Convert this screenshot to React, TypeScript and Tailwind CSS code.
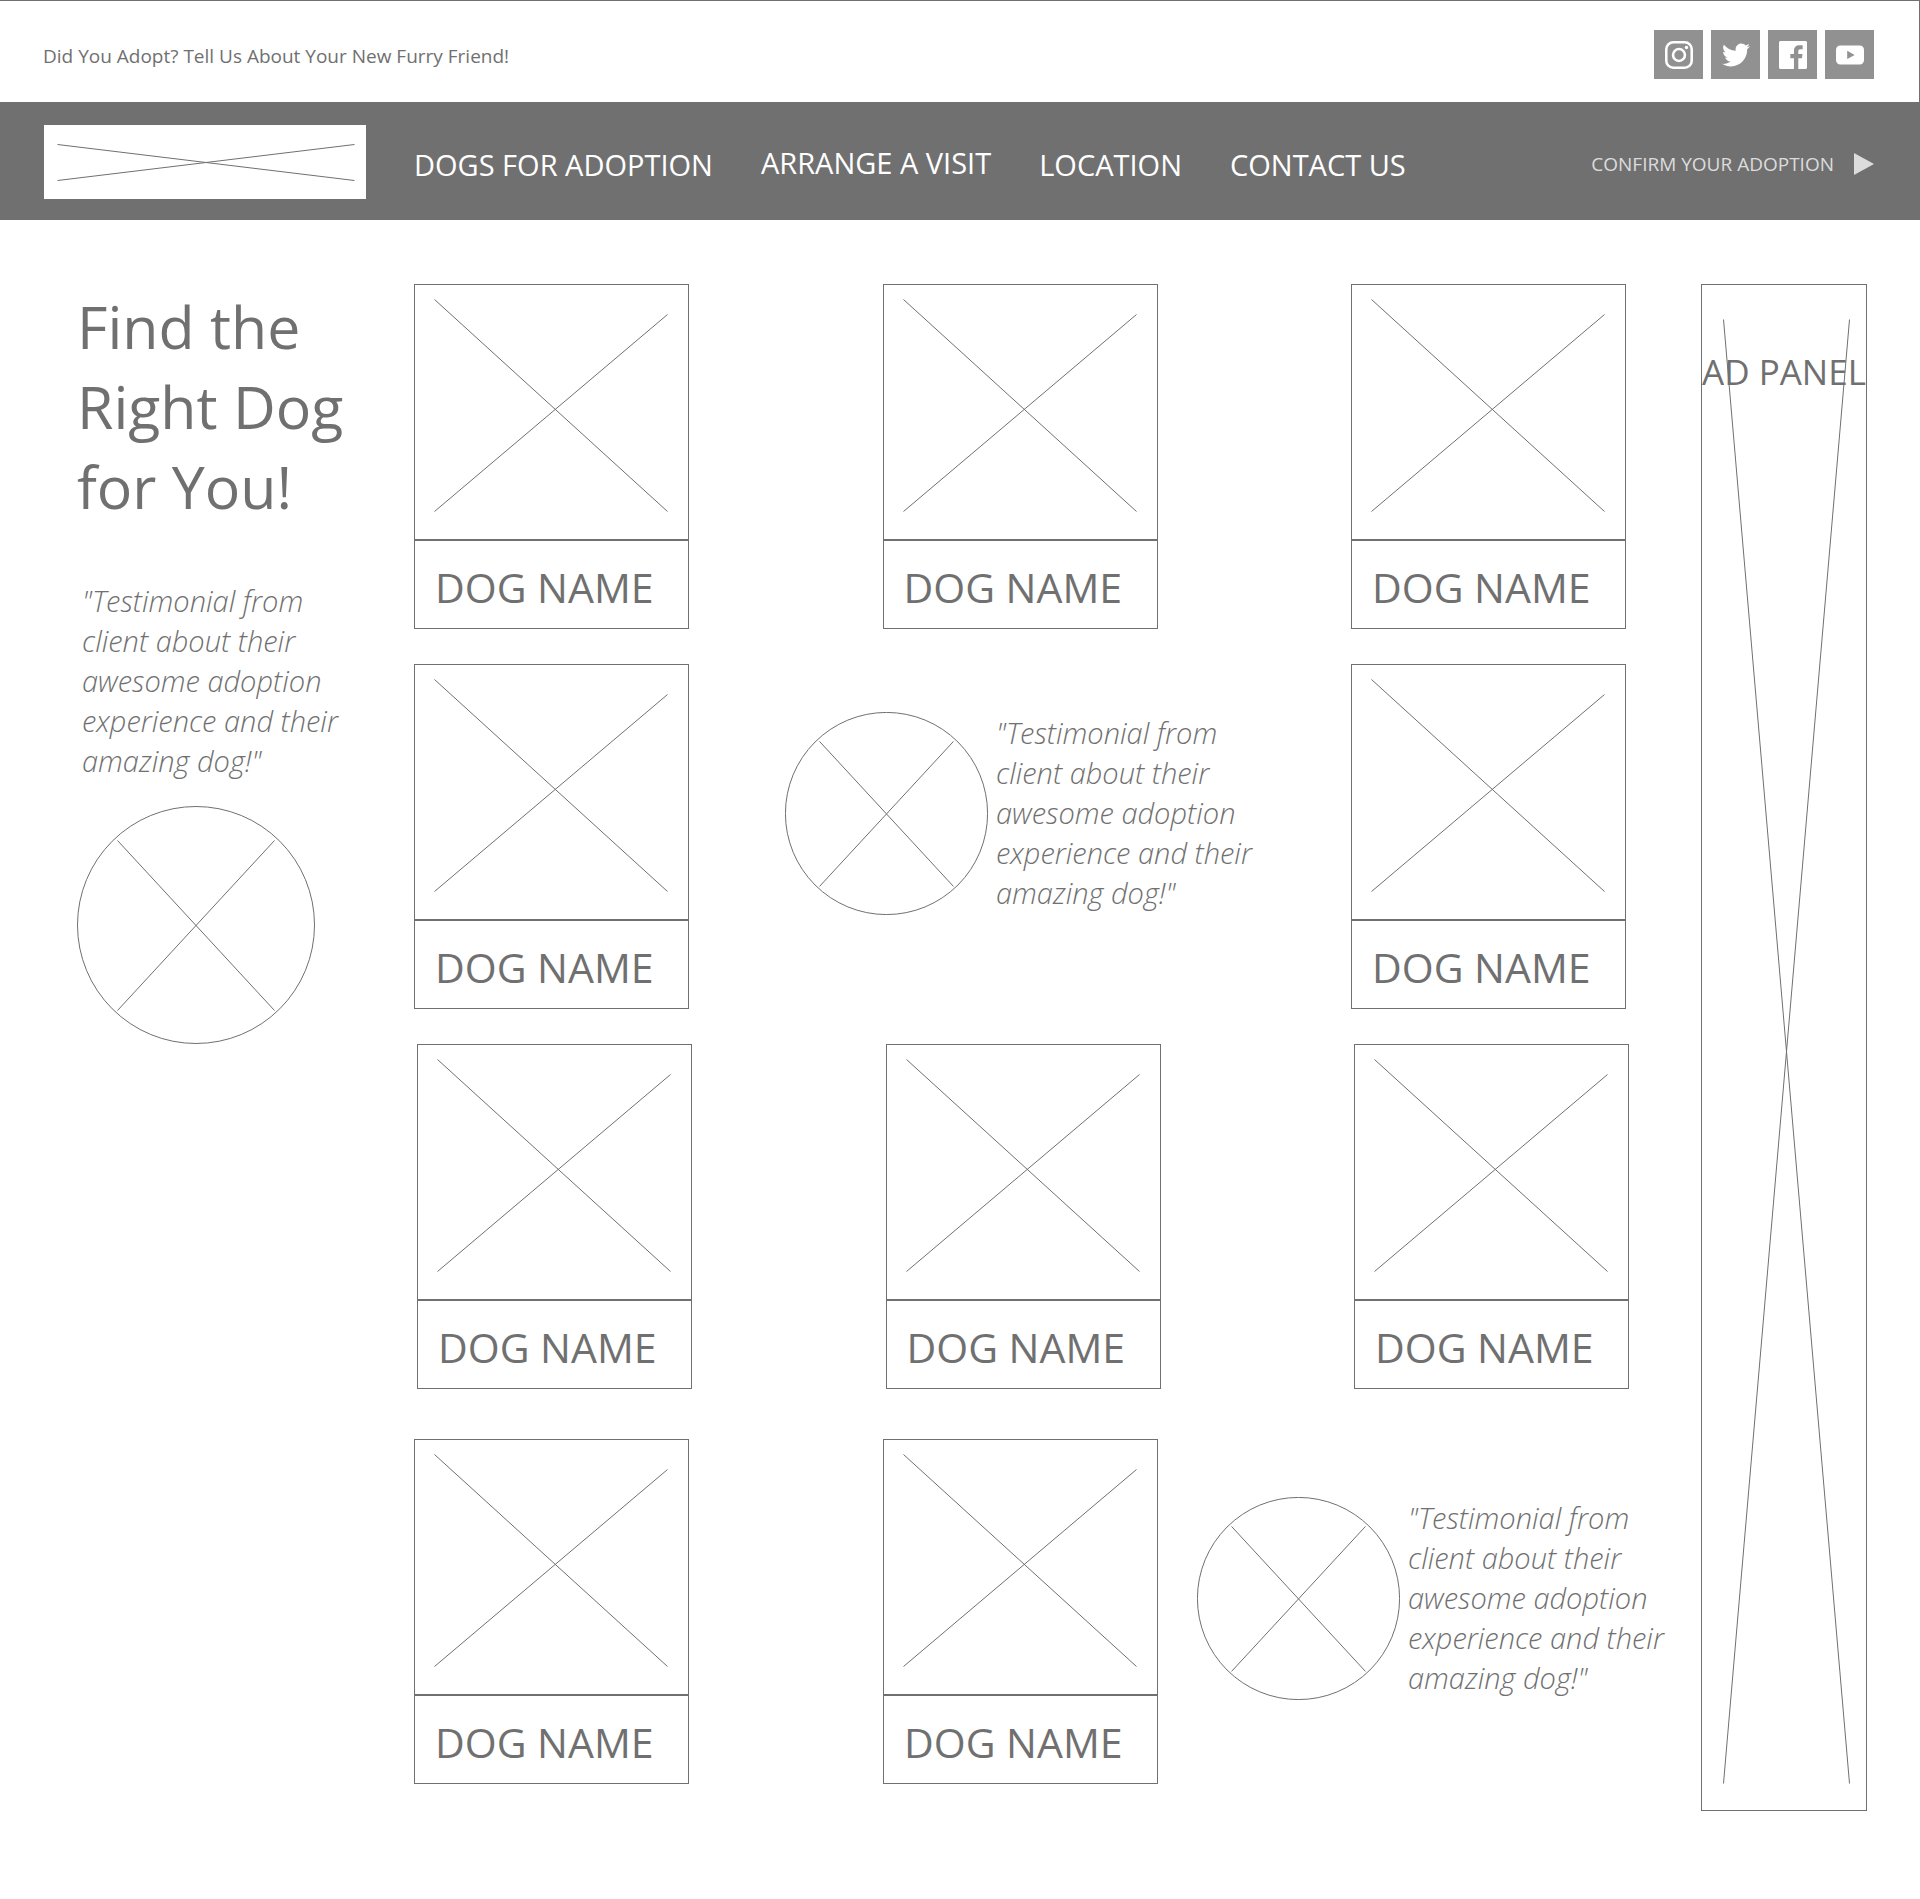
import type { ReactNode } from "react";

const QUOTE_LINES = [
  '"Testimonial from',
  "client about their",
  "awesome adoption",
  "experience and their",
  'amazing dog!"',
];

const SOCIALS: { label: string; icon: ReactNode }[] = [
  {
    label: "Instagram",
    icon: (
      <>
        <rect x="1.1" y="1.1" width="21.8" height="21.8" rx="6" fill="none" stroke="currentColor" strokeWidth="2.2" />
        <circle cx="12" cy="12" r="5.1" fill="none" stroke="currentColor" strokeWidth="2.2" />
        <circle cx="18.4" cy="5.6" r="1.45" />
      </>
    ),
  },
  {
    label: "Twitter",
    icon: (
      <path d="M23.954 4.569c-.885.389-1.83.654-2.825.775 1.014-.611 1.794-1.574 2.163-2.723-.951.555-2.005.959-3.127 1.184-.896-.959-2.173-1.559-3.591-1.559-2.717 0-4.92 2.203-4.92 4.917 0 .39.045.765.127 1.124C7.691 8.094 4.066 6.13 1.64 3.161c-.427.722-.666 1.561-.666 2.475 0 1.71.87 3.213 2.188 4.096-.807-.026-1.566-.248-2.228-.616v.061c0 2.385 1.693 4.374 3.946 4.827-.413.111-.849.171-1.296.171-.314 0-.615-.03-.916-.086.631 1.953 2.445 3.377 4.604 3.417-1.68 1.319-3.809 2.105-6.102 2.105-.39 0-.779-.023-1.17-.067 2.189 1.394 4.768 2.209 7.557 2.209 9.054 0 13.999-7.496 13.999-13.986 0-.209 0-.42-.015-.63.961-.689 1.8-1.56 2.46-2.548l-.047-.02z" />
    ),
  },
  {
    label: "Facebook",
    icon: (
      <path d="M22.676 0H1.324C.593 0 0 .593 0 1.324v21.352C0 23.408.593 24 1.324 24h11.494v-9.294H9.689v-3.621h3.129V8.41c0-3.099 1.894-4.785 4.659-4.785 1.325 0 2.464.097 2.796.141v3.24h-1.921c-1.5 0-1.792.721-1.792 1.771v2.311h3.584l-.465 3.63H16.56V24h6.115c.733 0 1.325-.592 1.325-1.324V1.324C24 .593 23.408 0 22.676 0" />
    ),
  },
  {
    label: "YouTube",
    icon: (
      <path
        fillRule="evenodd"
        d="M3.6 3.8h16.8a3.6 3.6 0 0 1 3.6 3.6v9.2a3.6 3.6 0 0 1-3.6 3.6H3.6a3.6 3.6 0 0 1-3.6-3.6V7.4a3.6 3.6 0 0 1 3.6-3.6zM9.6 8.3v7.2l6.4-3.6z"
      />
    ),
  },
];

function DogCard() {
  return (
    <a href="#dog" className="block w-[275px] shrink-0">
      <svg viewBox="0 0 273 254" className="box-content block h-[254px] w-[273px] border border-[#707070]" fill="none" stroke="#707070">
        <path d="M19.5 14.5L252.5 226.5M252.5 29.5L19.5 226.5" />
      </svg>
      <h2 className="border border-[#707070] pt-4 pb-[11px] pl-5 text-[41px] leading-[60px]">DOG NAME</h2>
    </a>
  );
}

function RoundPhoto({ className }: { className: string }) {
  return (
    <svg viewBox="0 0 238 238" className={className} fill="none" stroke="#707070">
      <circle cx="119" cy="119" r="118.5" vectorEffect="non-scaling-stroke" />
      <path d="M40.5 34.5L197.5 204.5M197.5 34.5L40.5 204.5" vectorEffect="non-scaling-stroke" />
    </svg>
  );
}

function Quote() {
  return (
    <blockquote className="pt-px text-[29px] leading-10 font-[350] whitespace-nowrap italic">
      {QUOTE_LINES.map((line) => (
        <span key={line} className="block">
          {line}
        </span>
      ))}
    </blockquote>
  );
}

function Testimonial() {
  return (
    <figure className="flex w-[470px] shrink-0 items-start gap-2">
      <RoundPhoto className="size-[203px] shrink-0" />
      <Quote />
    </figure>
  );
}

export default function App() {
  return (
    <div className="bg-white font-['Open_Sans','Noto_Sans',sans-serif] text-[#707070]">
      <header>
        <div className="flex items-center justify-between border-t border-r border-[#707070] pt-[29px] pr-[45px] pb-[23px] pl-[43px]">
          <a href="#story" className="pt-[2px] text-[19px] leading-7">
            Did You Adopt? Tell Us About Your New Furry Friend!
          </a>
          <div className="flex gap-2">
            {SOCIALS.map(({ label, icon }) => (
              <a key={label} href="#social" aria-label={label} className="flex size-[49px] items-center justify-center bg-[#919191] text-white">
                <svg viewBox="0 0 24 24" className="size-7" fill="currentColor">
                  {icon}
                </svg>
              </a>
            ))}
          </div>
        </div>

        <div className="flex items-center bg-[#707070] pt-[23px] pr-[46px] pb-[21px] pl-11">
          <a href="#home" aria-label="Home" className="block shrink-0 bg-white">
            <svg viewBox="0 0 322 74" className="block h-[74px] w-[322px]" fill="none" stroke="#707070">
              <path d="M13.5 19.5L310.5 55.5M310.5 19.5L13.5 55.5" />
            </svg>
          </a>
          <nav className="ml-12 flex flex-1 items-center gap-12 pt-1.5 text-[29px] leading-10 whitespace-nowrap text-white">
            <a href="#dogs">DOGS FOR ADOPTION</a>
            <a href="#visit" className="pb-1">
              ARRANGE A VISIT
            </a>
            <a href="#location">LOCATION</a>
            <a href="#contact">CONTACT US</a>
          </nav>
          <button type="button" className="flex items-center gap-5 pt-1 text-[19px] leading-7 whitespace-nowrap text-[#dcdcdc]">
            <span>CONFIRM YOUR ADOPTION</span>
            <svg viewBox="0 0 20 22" className="h-[22px] w-5" fill="currentColor">
              <path d="M0 0L20 11L0 22z" />
            </svg>
          </button>
        </div>
      </header>

      <main className="flex pt-16 pr-[53px] pb-[88px] pl-[77px]">
        <aside className="w-[337px] shrink-0">
          <h1 className="pt-[2px] text-[59px] leading-20">
            Find the
            <br />
            Right Dog
            <br />
            for You!
          </h1>
          <figure className="mt-[54px]">
            <div className="pl-[5px]">
              <Quote />
            </div>
            <RoundPhoto className="mt-[25px] size-[238px]" />
          </figure>
        </aside>

        <section className="flex flex-1 flex-col gap-[35px] pb-[27px]">
          <div className="flex justify-between pr-[41px]">
            <DogCard />
            <DogCard />
            <DogCard />
          </div>
          <div className="flex justify-between pr-[41px]">
            <DogCard />
            <div className="pt-12">
              <Testimonial />
            </div>
            <DogCard />
          </div>
          <div className="flex justify-between pr-[38px] pl-[3px]">
            <DogCard />
            <DogCard />
            <DogCard />
          </div>
          <div className="flex justify-between pt-[15px]">
            <DogCard />
            <div className="flex gap-[39px]">
              <DogCard />
              <div className="pt-[58px]">
                <Testimonial />
              </div>
            </div>
          </div>
        </section>

        <aside className="relative ml-[34px] w-[166px] shrink-0 border border-[#707070]">
          <svg viewBox="0 0 164 1525" preserveAspectRatio="none" className="absolute inset-0 size-full" fill="none" stroke="#707070">
            <path d="M21.5 34.5L147.5 1498.5M147.5 34.5L21.5 1498.5" vectorEffect="non-scaling-stroke" />
          </svg>
          <h2 className="relative flex justify-center pt-[63px] text-[35px] leading-12 whitespace-nowrap">AD PANEL</h2>
        </aside>
      </main>
    </div>
  );
}
